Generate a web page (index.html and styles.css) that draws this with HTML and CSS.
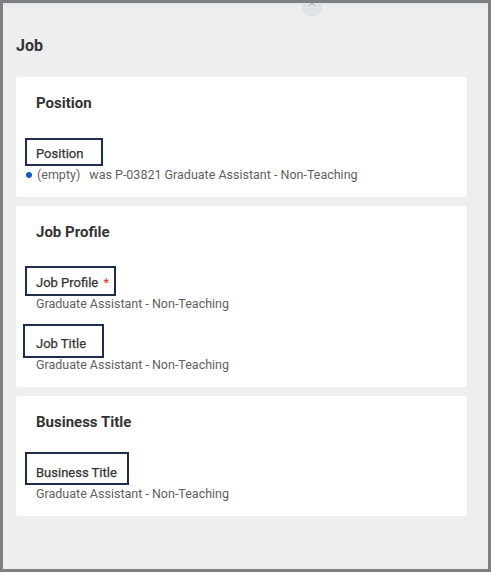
FILE: index.html
```html
<!DOCTYPE html>
<html>
<head>
<meta charset="utf-8">
<link rel="stylesheet" href="styles.css">
</head>
<body>
<div class="frame">
  <div class="topline"></div>
  <div class="handle"><svg width="8" height="5" viewBox="0 0 8 5"><path d="M1 4 L4 1 L7 4" fill="none" stroke="#9aa0a4" stroke-width="1"/></svg></div>
  <h1 class="page-title">Job</h1>

  <section class="card">
    <h2 class="card-title">Position</h2>
    <div class="field">
      <div class="label">Position<span class="annot annot-position"></span></div>
      <div class="value"><span class="dot"></span><span class="empty">(empty)</span><span class="was">was P-03821 Graduate Assistant - Non-Teaching</span></div>
    </div>
  </section>

  <section class="card">
    <h2 class="card-title">Job Profile</h2>
    <div class="field">
      <div class="label">Job Profile <span class="req">*</span><span class="annot annot-profile"></span></div>
      <div class="value">Graduate Assistant - Non-Teaching</div>
    </div>
    <div class="field">
      <div class="label">Job Title<span class="annot annot-title"></span></div>
      <div class="value">Graduate Assistant - Non-Teaching</div>
    </div>
  </section>

  <section class="card">
    <h2 class="card-title">Business Title</h2>
    <div class="field">
      <div class="label">Business Title<span class="annot annot-business"></span></div>
      <div class="value">Graduate Assistant - Non-Teaching</div>
    </div>
  </section>
</div>
</body>
</html>
```

FILE: styles.css
```css
html, body {
  margin: 0;
  padding: 0;
}
body {
  width: 491px;
  height: 572px;
  background: #808080;
  font-family: Roboto, "Liberation Sans", Arial, sans-serif;
  overflow: hidden;
}
.frame {
  position: relative;
  margin: 3px 3px 0 3px;
  width: 485px;
  height: 566px;
  background: #edeef0;
  box-sizing: border-box;
  padding: 0 21px 0 13px;
  overflow: hidden;
}
.topline {
  position: absolute;
  left: 0;
  right: 0;
  top: 0;
  height: 2px;
  background: #dfe5ec;
}
.handle {
  position: absolute;
  left: 299px;
  top: -6px;
  width: 20px;
  height: 20px;
  border-radius: 50%;
  background: #dfe3e5;
  display: flex;
  align-items: flex-end;
  justify-content: center;
  box-sizing: border-box;
}
.handle svg {
  margin-bottom: 10px;
}
.page-title {
  margin: 0;
  padding-top: 33px;
  height: 74px;
  box-sizing: border-box;
  font-size: 16px;
  line-height: 20px;
  font-weight: 700;
  color: #333333;
}
.card {
  background: #ffffff;
  border-radius: 3px;
  padding: 16px 20px 12px 20px;
  margin-bottom: 9px;
}
.card-title {
  margin: 0 0 31px 0;
  font-size: 15px;
  line-height: 20px;
  font-weight: 700;
  color: #333333;
}
.field + .field {
  margin-top: 20px;
}
.label {
  position: relative;
  font-size: 13px;
  line-height: 20px;
  font-weight: 400;
  color: #333333;
  -webkit-text-stroke: 0.25px #333333;
}
.req {
  color: #de2c2c;
  margin-left: 2px;
  -webkit-text-stroke: 0;
}
.value {
  font-size: 12.5px;
  line-height: 20px;
  padding-top: 1px;
  color: #5f5f5f;
  display: flex;
  align-items: center;
}
.dot {
  width: 6px;
  height: 6px;
  border-radius: 50%;
  background: #0b5fc6;
  margin-left: -10px;
  margin-right: 5px;
}
.empty {
  margin-right: 9px;
}
.annot {
  position: absolute;
  border: 2px solid #1f2d4d;
  box-sizing: border-box;
  pointer-events: none;
  -webkit-text-stroke: 0;
}
.annot-position {
  left: -11px;
  top: -6px;
  width: 78px;
  height: 28px;
}
.annot-profile {
  left: -11px;
  top: -7px;
  width: 91px;
  height: 30px;
}
.annot-title {
  left: -13px;
  top: -10px;
  width: 81px;
  height: 34px;
}
.annot-business {
  left: -11px;
  top: -11px;
  width: 104px;
  height: 33px;
}
```
